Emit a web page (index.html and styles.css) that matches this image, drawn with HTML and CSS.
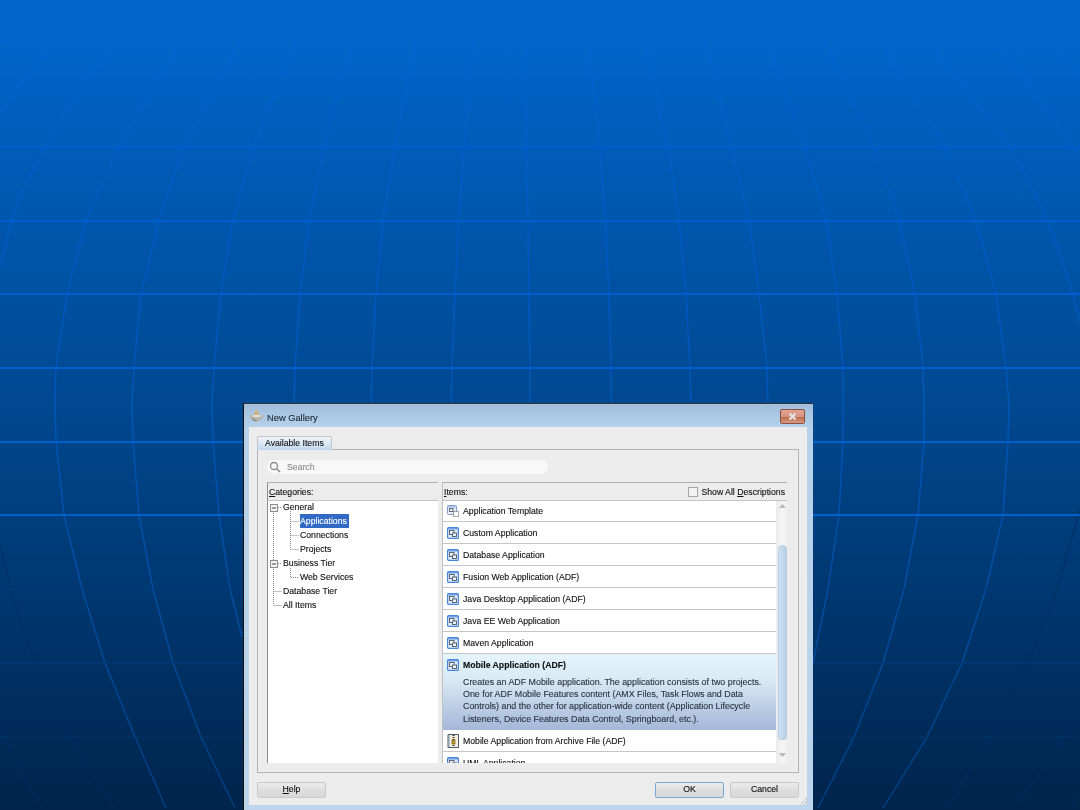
FILE: index.html
```html
<!DOCTYPE html>
<html lang="en">
<head>
<meta charset="utf-8">
<title>New Gallery</title>
<link rel="stylesheet" href="styles.css">
</head>
<body>
<div class="desktop">
  <svg class="backdrop" width="1080" height="810" viewBox="0 0 1080 810" aria-hidden="true">
    <defs>
      <linearGradient id="curve" gradientUnits="userSpaceOnUse" x1="0" y1="0" x2="0" y2="810">
        <stop offset="0.02" stop-color="#0066cc"/>
        <stop offset="0.08" stop-color="#0063d0"/>
        <stop offset="0.3" stop-color="#0059c6"/>
        <stop offset="0.55" stop-color="#0055b8"/>
        <stop offset="0.8" stop-color="#004b9e"/>
        <stop offset="1" stop-color="#003f84"/>
      </linearGradient>
    </defs>
    <g class="curves">
      <polyline points="0,45 28,20 50,2"/>
      <polyline points="0,113 29,73 83,20 100,4"/>
      <polyline points="0,265 12,220 26,183 45,147 91,73 152,7"/>
      <polyline points="166,808 135,737 105,663 82,589 64,515 56,442 55,400 56,367 67,294 86,220 119,147 162,73 193,25 210,5"/>
      <polyline points="235,808 201,737 173,663 153,589 139,515 133,442 132,405 134,367 141,294 159,220 184,147 224,73 248,25 262,5"/>
      <polyline points="242,637 230,589 219,515 213,442 212,405 214,367 221,294 233,220 253,147 283,73 303,25 310,8"/>
      <polyline points="294,430 294,405 295,367 300,294 309,220 324,147 343,73 362,25 368,8"/>
      <polyline points="371,430 371,405 372,367 376,294 383,220 395,147 409,73 419,25 422,8"/>
      <polyline points="451,430 451,405 452,367 455,294 459,220 464,147 471,73 474,25 475,8"/>
      <polyline points="530,430 530,405 530,367 529,294 528,220 526,147 526,73 525,25"/>
      <polyline points="611,430 611,405 611,367 609,294 605,220 600,147 592,73 587,25 585,8"/>
      <polyline points="691,430 691,405 690,367 686,294 679,220 668,147 652,73 640,25 636,8"/>
      <polyline points="768,430 768,405 767,367 759,294 749,220 731,147 714,73 700,25 695,8"/>
      <polyline points="813,663 828,589 839,515 843,442 843,400 843,367 837,294 826,220 805,147 778,73 761,25 755,8"/>
      <polyline points="818,808 854,737 883,663 904,589 918,515 924,442 924,405 923,367 915,294 899,220 874,147 840,73 816,25 806,8"/>
      <polyline points="883,808 927,737 962,663 986,589 1003,515 1008,442 1009,405 1006,367 996,294 976,220 945,147 899,73 871,25 858,8"/>
      <polyline points="1082,330 1073,294 1048,220 1011,147 954,73 916,25 900,8"/>
      <polyline points="1082,160 1021,73 969,20 955,8"/>
      <polyline points="1082,75 1026,20 1012,8"/>
    </g>
    <g class="curves-dim">
      <polyline points="0,545 13,597 35,663 70,737 113,808"/>
      <polyline points="1082,503 1057,589 1028,663 990,737 947,808"/>
      <polyline points="0,726 23,777 42,808"/>
      <polyline points="1082,713 1040,773 1013,808"/>
      <polyline points="1082,793 1072,808"/>
    </g>
    <path class="rule rule-top" d="M0 73.500H1080"/>
    <path class="rule rule-upper" d="M0 147H1080M0 221H1080M0 294H1080M0 368H1080"/>
    <path class="rule rule-mid" d="M0 442H1080M0 515H1080"/>
    <path class="rule rule-low1" d="M0 589.500H1080"/>
    <path class="rule rule-low2" d="M0 663H1080"/>
    <path class="rule rule-low3" d="M0 737H1080"/>
  </svg>

  <svg class="sprites" width="0" height="0" aria-hidden="true">
    <symbol id="app" viewBox="0 0 12 12">
      <rect x="0.600" y="0.600" width="10.800" height="10.800" rx="1" fill="#dfeaf8" stroke="#4686dc" stroke-width="1.200"/>
      <rect x="1" y="1" width="10" height="1.500" fill="#6f9fe0"/>
      <rect x="2.500" y="3.500" width="4.500" height="4" fill="#eef3f9" stroke="#5a6676"/>
      <rect x="5.500" y="6" width="4" height="3.500" fill="#eef3f9" stroke="#5a6676"/>
    </symbol>
  </svg>

  <section class="dialog">
    <header class="titlebar">
      <svg class="cup" width="15" height="14" viewBox="0 0 15 14" aria-hidden="true">
        <path d="M7.500 .5c1.500 1.500-1 2 .5 4 1.500-.5 2-1.500 1-2.500 1.500 1 1 3.500-1.500 4S5 4 7.500 .5z" fill="#eda742"/>
        <path d="M.5 6.500c2-1.200 12-1.200 14 0-.5 3-2.500 5-4.500 5.500 0 1-5 1-5 0-2-.5-4-2.500-4.500-5.500z" fill="#b9b6ae"/>
        <path d="M2 7c2.500-1 8.500-1 11 0-2.500 1-8.500 1-11 0z" fill="#f6f4ee"/>
        <path d="M3 9.500c1.500 1.500 2.500 2 4.500 2" fill="none" stroke="#6f6e6a" stroke-width="1"/>
      </svg>
      <span class="title">New Gallery</span>
      <button class="close" type="button" aria-label="Close">
        <svg width="11" height="9" viewBox="0 0 11 9"><path d="M2.500 1.500l6 6M8.500 1.500l-6 6" stroke="#e6e2ea" stroke-width="2.200"/></svg>
      </button>
    </header>

    <div class="client">
      <div class="tabs"><span class="tab">Available Items</span></div>
      <div class="panel">
        <div class="search">
          <svg width="12" height="12" viewBox="0 0 12 12" aria-hidden="true"><circle cx="5" cy="5" r="3.500" fill="none" stroke="#8a8a8a" stroke-width="1.300"/><path d="M7.700 7.700L11 11" stroke="#8a8a8a" stroke-width="1.600"/></svg>
          <span class="search-hint">Search</span>
        </div>
        <div class="columns">
          <div class="categories">
            <div class="head"><span><u>C</u>ategories:</span></div>
            <div class="tree">
              <svg class="connectors" width="60" height="110" viewBox="0 0 60 110" aria-hidden="true">
                <path d="M5.500 10V104.500M5.500 90.500H14M5.500 104.500H14M10 6.500H14M22.500 10V48.500M22.500 20.500H31M22.500 34.500H31M22.500 48.500H31M10 62.500H14M22.500 67V76.500H31" fill="none" stroke="#888" stroke-dasharray="1 1"/>
                <rect x="2.500" y="3.500" width="7" height="7" fill="#f4f4f4" stroke="#8c8c8c"/><path d="M4 7H8" stroke="#444"/>
                <rect x="2.500" y="59.500" width="7" height="7" fill="#f4f4f4" stroke="#8c8c8c"/><path d="M4 63H8" stroke="#444"/>
              </svg>
              <div class="node lvl1 node-top">General</div>
              <div class="node lvl2"><span class="picked">Applications</span></div>
              <div class="node lvl2">Connections</div>
              <div class="node lvl2">Projects</div>
              <div class="node lvl1">Business Tier</div>
              <div class="node lvl2">Web Services</div>
              <div class="node lvl1">Database Tier</div>
              <div class="node lvl1">All Items</div>
            </div>
          </div>
          <div class="items">
            <div class="head head-items">
              <span><u>I</u>tems:</span>
              <label class="show-all"><span class="check"></span><span>Show All <u>D</u>escriptions</span></label>
            </div>
            <div class="list-wrap">
              <div class="list">
                <div class="row first">
                  <svg class="ico" viewBox="0 0 12 12" aria-hidden="true">
                    <rect x="0.500" y="0.500" width="9" height="9" rx="1" fill="#e6edf6" stroke="#7f9ed0"/>
                    <rect x="1" y="1" width="8" height="1.500" fill="#a9c2e4"/>
                    <rect x="2.500" y="3.500" width="3.500" height="3" fill="#f4f7fb" stroke="#5c6878"/>
                    <rect x="6.500" y="6.500" width="5" height="5" fill="#fff" stroke="#555" stroke-dasharray="1 1"/>
                  </svg>
                  <span>Application Template</span>
                </div>
                <div class="row"><svg class="ico" aria-hidden="true"><use href="#app"/></svg><span>Custom Application</span></div>
                <div class="row"><svg class="ico" aria-hidden="true"><use href="#app"/></svg><span>Database Application</span></div>
                <div class="row"><svg class="ico" aria-hidden="true"><use href="#app"/></svg><span>Fusion Web Application (ADF)</span></div>
                <div class="row"><svg class="ico" aria-hidden="true"><use href="#app"/></svg><span>Java Desktop Application (ADF)</span></div>
                <div class="row"><svg class="ico" aria-hidden="true"><use href="#app"/></svg><span>Java EE Web Application</span></div>
                <div class="row"><svg class="ico" aria-hidden="true"><use href="#app"/></svg><span>Maven Application</span></div>
                <div class="row selected">
                  <div class="sel-title"><svg class="ico" aria-hidden="true"><use href="#app"/></svg><strong>Mobile Application (ADF)</strong></div>
                  <p class="desc">Creates an ADF Mobile application. The application consists of two projects.<br>One for ADF Mobile Features content (AMX Files, Task Flows and Data<br>Controls) and the other for application-wide content (Application Lifecycle<br>Listeners, Device Features Data Control, Springboard, etc.).</p>
                </div>
                <div class="row">
                  <svg class="ico ico-tall" viewBox="0 0 12 14" aria-hidden="true">
                    <path d="M1 .5H11.500V13.500H1z" fill="#f5efdc" stroke="#4e5a70"/>
                    <path d="M2 1V13" stroke="#7f96c2" stroke-width="1"/>
                    <path d="M6.500 1V13" stroke="#3c3420" stroke-width="2" stroke-dasharray="1 1"/>
                    <rect x="5" y="6" width="3" height="4" fill="#d4a92e" stroke="#4a3a10" stroke-width=".6"/>
                  </svg>
                  <span>Mobile Application from Archive File (ADF)</span>
                </div>
                <div class="row"><svg class="ico" aria-hidden="true"><use href="#app"/></svg><span>UML Application</span></div>
              </div>
              <div class="scroll">
                <svg class="arrow" width="7" height="4" viewBox="0 0 7 4" aria-hidden="true"><path d="M3.500 0L7 4H0z"/></svg>
                <div class="thumb"></div>
                <svg class="arrow" width="7" height="4" viewBox="0 0 7 4" aria-hidden="true"><path d="M0 0H7L3.500 4z"/></svg>
              </div>
            </div>
          </div>
        </div>
      </div>
      <footer class="actions">
        <button class="btn" type="button"><u>H</u>elp</button>
        <div class="actions-right">
          <button class="btn btn-default" type="button">OK</button>
          <button class="btn" type="button">Cancel</button>
        </div>
      </footer>
      <svg class="grip" width="7" height="7" viewBox="0 0 7 7" aria-hidden="true"><path d="M7 0L0 7M7 3L3 7M7 5.500L5.500 7" stroke="#8d9499" stroke-width="1" stroke-dasharray="1 1"/></svg>
    </div>
  </section>
</div>
</body>
</html>
```

FILE: styles.css
```css
* { box-sizing: border-box; }

html, body { margin: 0; padding: 0; }

body {
  font-family: "Liberation Sans", Arial, sans-serif;
  font-size: 8.7px;
  color: #111;
  -webkit-text-stroke: 0.12px currentColor;
}

.desktop {
  position: relative;
  width: 1080px;
  height: 810px;
  overflow: hidden;
  background: linear-gradient(180deg, #0066cc 3%, #004890 50%, #00244c 100%);
}

.backdrop { position: absolute; inset: 0; }
.sprites { position: absolute; }

.curves polyline, .curves-dim polyline { fill: none; stroke-linejoin: round; }
.curves polyline { stroke: url(#curve); stroke-width: 1.4; }
.curves-dim polyline { stroke: #002e62; stroke-width: 1; }

.rule { fill: none; }
.rule-top { stroke: #0062cc; stroke-width: 1; }
.rule-upper { stroke: #005ed0; stroke-width: 2; }
.rule-mid { stroke: #0060cc; stroke-width: 2; }
.rule-low1 { stroke: #003d7e; stroke-width: 1; }
.rule-low2 { stroke: #00397a; stroke-width: 1.5; }
.rule-low3 { stroke: #00356e; stroke-width: 1; }

/* dialog window on the desktop */
.dialog {
  position: absolute;
  left: 243px;
  top: 403px;
  width: 570px;
  height: 407px;
  display: flex;
  flex-direction: column;
  padding: 0 6px 5px 5px;
  border-top: 1px solid #333;
  border-left: 1px solid #111;
  background: linear-gradient(180deg, #a3bedb 0, #b6d1ea 24px, #bcd5ec 100%);
  filter: blur(0.3px);
}

.titlebar {
  flex: none;
  height: 23px;
  display: flex;
  align-items: center;
  gap: 3px;
}

.cup { flex: none; margin-top: 1px; }
.title { font-size: 9.3px; color: #1d2a38; margin-top: 5px; }

.close {
  margin-left: auto;
  margin-right: 2px;
  margin-top: 1px;
  width: 25px;
  height: 15px;
  padding: 0;
  border: 1px solid #8a5045;
  border-radius: 2px;
  background: linear-gradient(180deg, #e0a390 0, #d8947f 50%, #b96f4e 58%, #c97f62 75%, #d99a86 100%);
  display: flex;
  align-items: center;
  justify-content: center;
}

.client {
  position: relative;
  flex: 1;
  display: flex;
  flex-direction: column;
  padding: 9px 8px 0 8px;
  background: #ececec;
}

.tabs { flex: none; height: 13px; display: flex; }

.tab {
  width: 75px;
  height: 14px;
  padding-left: 7px;
  line-height: 12px;
  border: 1px solid #c6c6c6;
  border-bottom: none;
  border-radius: 2px 2px 0 0;
  background: linear-gradient(180deg, #eef3f8 0, #dce8f4 50%, #bcd6ef 100%);
  position: relative;
  z-index: 1;
}

.panel {
  flex: none;
  width: 542px;
  height: 324px;
  padding: 10px 11px 9px 9px;
  border: 1px solid #b4b4b4;
  display: flex;
  flex-direction: column;
  gap: 8px;
}

.search {
  flex: none;
  width: 281px;
  height: 14px;
  padding-left: 2px;
  display: flex;
  align-items: center;
  gap: 6px;
  border-radius: 7px;
  background: #f8f8f8;
}

.search-hint { color: #8a8a8a; }

.columns {
  flex: 1;
  min-height: 0;
  display: grid;
  grid-template-columns: 171px 345px;
  gap: 4px;
}

.categories, .items {
  min-height: 0;
  display: flex;
  flex-direction: column;
}

.head {
  flex: none;
  height: 19px;
  padding-left: 1px;
  display: flex;
  align-items: center;
  border-top: 1px solid #b0b0b0;
  border-bottom: 1px solid #c4c4c4;
  background: #ececec;
}

.categories .head { border-left: 1px solid #8c8c8c; }
.items .head { padding-left: 1px; padding-right: 2px; border-left: 1px solid #c0c0c0; }

.head-items { justify-content: space-between; }

.show-all { display: flex; align-items: center; gap: 3px; }

.check {
  width: 10px;
  height: 10px;
  border: 1px solid #a6a6a6;
  background: #f2f2f2;
}

.tree {
  position: relative;
  flex: 1;
  background: #fff;
  border-left: 1px solid #8c8c8c;
}

.connectors { position: absolute; left: 0; top: 0; }

.node {
  position: relative;
  height: 14px;
  line-height: 14px;
  white-space: nowrap;
}

.node-top { margin-top: -1px; }

.lvl1 { padding-left: 15px; }
.lvl2 { padding-left: 32px; }

.picked {
  display: inline-block;
  padding: 0 2px 0 0;
  height: 14px;
  background: #316ac5;
  color: #fff;
}

.list-wrap {
  flex: 1;
  min-height: 0;
  display: flex;
}

.list {
  flex: none;
  width: 334px;
  overflow: hidden;
  border-left: 1px solid #c0c0c0;
  background: #fff;
}

.row {
  height: 22px;
  padding-left: 4px;
  display: flex;
  align-items: center;
  gap: 4px;
  border-bottom: 1px solid #c6c6c6;
}

.row.first { height: 21px; padding-bottom: 1px; }

.row.selected {
  height: 76px;
  padding-left: 0;
  display: block;
  background: linear-gradient(180deg, #e4f5fb 0, #d7e9f4 35%, #a5b7d8 100%);
  border-bottom: none;
}

.sel-title {
  height: 22px;
  padding-left: 4px;
  display: flex;
  align-items: center;
  gap: 4px;
}

.desc {
  margin: 0;
  padding-left: 20px;
  font-size: 8.9px;
  line-height: 12.2px;
  white-space: nowrap;
  color: #2b3442;
}

.ico { flex: none; width: 12px; height: 12px; }
.ico-tall { height: 14px; }

.scroll {
  flex: none;
  width: 11px;
  margin-left: 1px;
  display: flex;
  flex-direction: column;
  align-items: center;
  padding-top: 3px;
  background: linear-gradient(90deg, #ececec 0, #f6f6f6 50%, #ececec 100%);
}

.arrow { flex: none; fill: #b9b9b9; }

.thumb {
  flex: none;
  width: 9px;
  height: 195px;
  margin: 37px 0 13px;
  border: 1px solid #b7cde4;
  border-radius: 4px 4px 3px 3px;
  background: linear-gradient(90deg, #cfe0f1 0, #c1d6ec 60%, #b7cde6 100%);
}

.actions {
  flex: none;
  margin-top: 9px;
  display: flex;
  justify-content: space-between;
}

.actions-right { display: flex; gap: 6px; }

.btn {
  width: 69px;
  height: 16px;
  padding: 0 0 2px;
  font: inherit;
  color: #111;
  text-align: center;
  border: 1px solid #c9c9c9;
  border-radius: 2px;
  background: linear-gradient(180deg, #ececec 0, #dedede 50%, #d8d8d8 100%);
}

.btn-default { border-color: #7aa8d2; }

.grip { position: absolute; right: 0; bottom: 0; }
```
